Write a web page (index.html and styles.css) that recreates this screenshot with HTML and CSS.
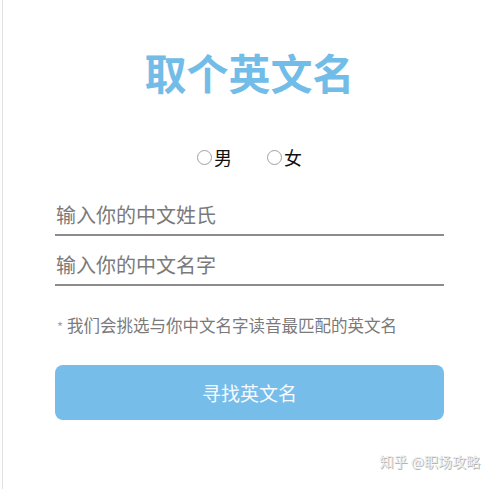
FILE: index.html
```html
<!DOCTYPE html>
<html lang="zh">
<head>
<meta charset="utf-8">
<link rel="stylesheet" href="styles.css">
</head>
<body>
<div class="page">
  <main class="form">
    <h1 class="title">取个英文名</h1>
    <div class="gender">
      <label class="opt"><input type="radio" name="g" class="radio"><span>男</span></label>
      <label class="opt"><input type="radio" name="g" class="radio"><span>女</span></label>
    </div>
    <input class="field" type="text" placeholder="输入你的中文姓氏">
    <input class="field" type="text" placeholder="输入你的中文名字">
    <p class="note"><span class="star">*</span>我们会挑选与你中文名字读音最匹配的英文名</p>
    <button class="btn" type="button">寻找英文名</button>
  </main>
  <div class="wm">知乎 @职场攻略</div>
</div>
</body>
</html>
```
FILE: styles.css
```css
html, body {
  margin: 0;
  padding: 0;
  background: #ffffff;
}
body {
  width: 500px;
  height: 489px;
  overflow: hidden;
  font-family: "Noto Sans CJK SC", "Noto Sans", sans-serif;
}
.page {
  position: relative;
  margin-left: 2px;
  height: 489px;
  border-left: 1px solid #e2e2e2;
}
.form {
  width: 389px;
  margin-left: 52px;
  display: flex;
  flex-direction: column;
}
.title {
  margin: 42px 0 0;
  font-size: 42px;
  line-height: 60px;
  font-weight: 700;
  color: #72bce8;
  text-align: center;
  letter-spacing: 0;
}
.gender {
  margin-top: 43px;
  display: flex;
  justify-content: center;
  gap: 35px;
  padding-right: 0;
}
.opt {
  display: flex;
  align-items: center;
  font-size: 18px;
  line-height: 24px;
  color: #111;
}
.radio {
  appearance: none;
  -webkit-appearance: none;
  width: 15px;
  height: 15px;
  margin: 0 2px 0 0;
  border: 1px solid #a0a0a0;
  border-radius: 50%;
  box-sizing: border-box;
  background: #fff;
}
.field {
  display: block;
  margin: 0;
  padding: 0 0 0 1px;
  height: 40px;
  border: 0;
  border-bottom: 2px solid #8c8c8c;
  font-family: inherit;
  font-size: 20px;
  color: #555;
  background: transparent;
  outline: none;
}
.field:first-of-type {
  margin-top: 25px;
}
.field + .field {
  margin-top: 8px;
}
.field::placeholder {
  color: #7a7a7a;
}
.note {
  margin: 28px 0 0 2px;
  font-size: 16.5px;
  line-height: 22px;
  color: #7a7a7a;
}
.star {
  color: #a0a0a0;
  font-size: 13px;
  margin-right: 4px;
}
.btn {
  margin-top: 27px;
  height: 55px;
  border: 0;
  border-radius: 8px;
  background: #76bdea;
  color: #f6fafd;
  font-family: inherit;
  font-size: 19px;
}
.wm {
  position: absolute;
  right: 20px;
  top: 451px;
  font-size: 14px;
  color: #ececec;
  text-shadow: 1px 1px 0 #b5b5b5;
}
```
